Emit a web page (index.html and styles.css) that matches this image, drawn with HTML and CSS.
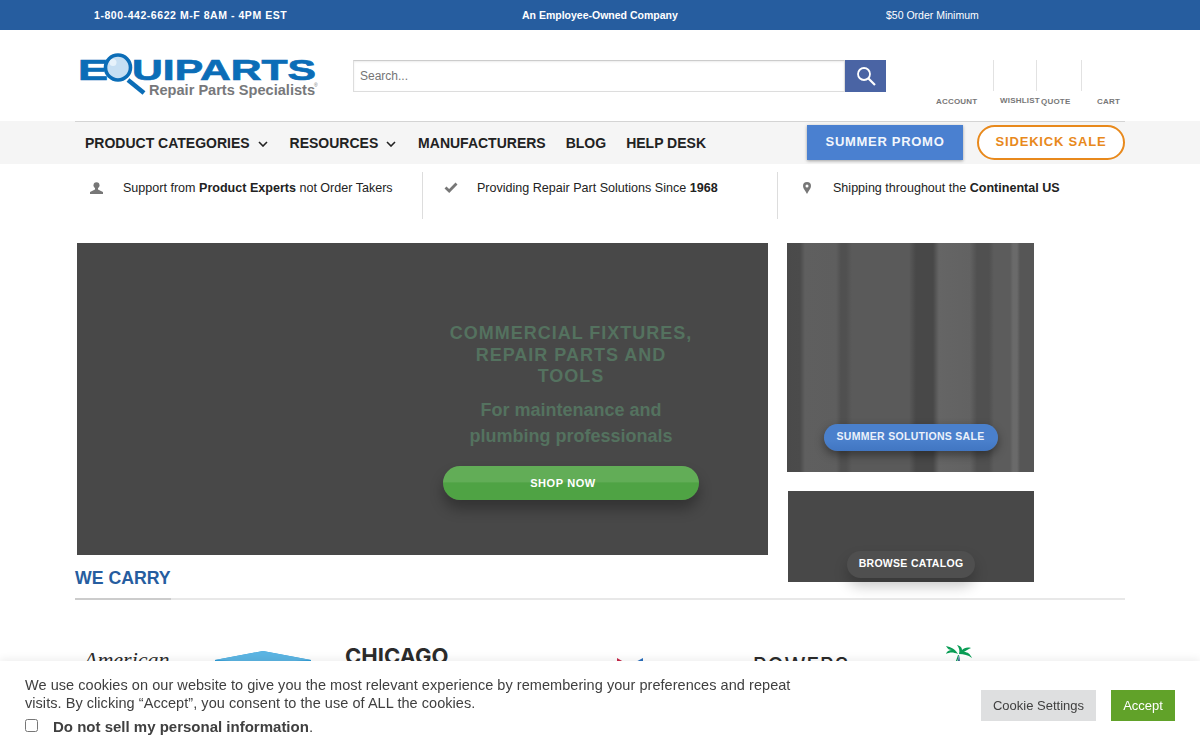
FILE: index.html
```html
<!DOCTYPE html>
<html lang="en">
<head>
  <meta charset="UTF-8">
  <meta name="viewport" content="width=device-width, initial-scale=1.0">
  <title>Equiparts</title>
  <link rel="stylesheet" href="styles.css">
</head>
<body>
  <div class="topbar">
    <span class="top-phone">1-800-442-6622 M-F 8AM - 4PM EST</span>
    <span class="top-owned">An Employee-Owned Company</span>
    <span class="top-min">$50 Order Minimum</span>
  </div>

  <header class="header">
    <a class="logo" href="#">
      <svg width="240" height="46" viewBox="0 0 240 46">
        <text class="logo-word" x="0" y="28" textLength="30" lengthAdjust="spacingAndGlyphs">E</text>
        <text class="logo-word" x="54" y="28" textLength="184" lengthAdjust="spacingAndGlyphs">UIPARTS</text>
        <line x1="50" y1="28" x2="66" y2="41" stroke="#0b6db7" stroke-width="4.5"/>
        <circle cx="40" cy="15.500" r="12.500" fill="#c6dff3" stroke="#0b6db7" stroke-width="3.600"/>
        <circle cx="35" cy="10.500" r="3.500" fill="#e6f2fb"/>
        <text class="logo-tag" x="71" y="43" textLength="166" lengthAdjust="spacingAndGlyphs">Repair Parts Specialists</text>
        <text class="logo-reg" x="236" y="35">®</text>
      </svg>
    </a>
    <form class="search">
      <input class="search-input" type="text" placeholder="Search...">
      <button class="search-btn" type="button" aria-label="Search">
        <svg width="20" height="20" viewBox="0 0 20 20" fill="none" stroke="#fff" stroke-width="1.800">
          <circle cx="8" cy="8" r="6"/>
          <path d="M12.500 12.500L19 19" stroke-width="2.200"/>
        </svg>
      </button>
    </form>
    <div class="account-links">
      <a class="acc acc-account" href="#"><span>ACCOUNT</span></a>
      <a class="acc acc-wishlist" href="#"><span>WISHLIST</span></a>
      <a class="acc acc-quote" href="#"><span>QUOTE</span></a>
      <a class="acc acc-cart" href="#"><span>CART</span></a>
    </div>
  </header>

  <nav class="nav">
    <div class="nav-inner">
      <a class="nav-link" href="#">PRODUCT CATEGORIES
        <svg class="chev" width="10" height="6" viewBox="0 0 10 6"><path d="M1 1l4 4 4-4" fill="none" stroke="#222" stroke-width="1.600"/></svg>
      </a>
      <a class="nav-link" href="#">RESOURCES
        <svg class="chev" width="10" height="6" viewBox="0 0 10 6"><path d="M1 1l4 4 4-4" fill="none" stroke="#222" stroke-width="1.600"/></svg>
      </a>
      <a class="nav-link" href="#">MANUFACTURERS</a>
      <a class="nav-link" href="#">BLOG</a>
      <a class="nav-link" href="#">HELP DESK</a>
      <a class="promo-btn" href="#">SUMMER PROMO</a>
      <a class="sidekick-btn" href="#">SIDEKICK SALE</a>
    </div>
  </nav>

  <section class="benefits">
    <div class="benefit benefit-one">
      <svg class="benefit-icon" width="13" height="12" viewBox="0 0 13 12" fill="#777"><circle cx="6.500" cy="3.200" r="3"/><path d="M5 6h3v1.500L13 10v2H0v-2l5-2.500z"/></svg>
      <p>Support from <b>Product Experts</b> not Order Takers</p>
    </div>
    <div class="benefit benefit-two">
      <svg class="benefit-icon" width="14" height="11" viewBox="0 0 14 11"><path d="M1.500 5.500l3.700 3.500L12.500 1.500" fill="none" stroke="#777" stroke-width="2.800"/></svg>
      <p>Providing Repair Part Solutions Since <b>1968</b></p>
    </div>
    <div class="benefit benefit-three">
      <svg class="benefit-icon" width="8" height="12" viewBox="0 0 8 12"><path d="M4 0a4 4 0 0 1 4 4c0 2.500-2.500 5-4 8C2.500 9 0 6.500 0 4a4 4 0 0 1 4-4z" fill="#777"/><circle cx="4" cy="4" r="1.500" fill="#fff"/></svg>
      <p>Shipping throughout the <b>Continental US</b></p>
    </div>
  </section>

  <main class="hero-row">
    <div class="hero">
      <div class="hero-copy">
        <h1>COMMERCIAL FIXTURES, REPAIR PARTS AND TOOLS</h1>
        <p>For maintenance and plumbing professionals</p>
        <a class="shop-btn" href="#">SHOP NOW</a>
      </div>
    </div>
    <div class="side">
      <div class="side-card side-summer">
        <a class="pill pill-blue" href="#">SUMMER SOLUTIONS SALE</a>
      </div>
      <div class="side-card side-catalog">
        <a class="pill pill-dark" href="#">BROWSE CATALOG</a>
      </div>
    </div>
  </main>

  <section class="carry">
    <div class="carry-head"><h2>WE CARRY</h2></div>
    <div class="brands">
      <span class="brand brand-american">American</span>
      <svg class="brand brand-hex" width="96" height="60" viewBox="0 0 96 60"><path d="M0 9L48 0l48 9v30L48 60 0 39z" fill="#2a9ad6"/><path d="M0 9L48 0l48 9-48 3z" fill="#5cb5e3"/></svg>
      <span class="brand brand-chicago">CHICAGO</span>
      <svg class="brand brand-star" width="26" height="30" viewBox="0 0 26 30"><path d="M0 0l12 7v20H0z" fill="#c8284a"/><path d="M26 0L13 7v20h13z" fill="#2a6fbe"/></svg>
      <span class="brand brand-powers">POWERS</span>
      <svg class="brand brand-palm" width="26" height="40" viewBox="0 0 26 40">
        <path d="M12 9C9 4 5 2 0 1c2 3 3 4 6 4-3 0-5 1-6 4 4-2 7-2 12 0zM13 9c1-4 0-6-2-9 4 1 5 3 5 5 2-2 5-3 9-2-3 1-5 3-7 4 4 0 6 2 8 6-4-3-8-4-13-4z" fill="#0a9d55"/>
        <path d="M12 10c-1 3-2 6-4 10l2 1c1-4 2-7 3-11z" fill="#0a9d55"/>
        <path d="M13 10c1 4 1 8 1 12h-3c1-4 1-8 2-12z" fill="#2b5d8f"/>
      </svg>
    </div>
  </section>

  <aside class="cookie-bar">
    <div class="cookie-text">
      <p>We use cookies on our website to give you the most relevant experience by remembering your preferences and repeat visits. By clicking “Accept”, you consent to the use of ALL the cookies.</p>
      <label class="cookie-check"><input type="checkbox"><span><b>Do not sell my personal information</b>.</span></label>
    </div>
    <div class="cookie-actions">
      <button class="cookie-settings" type="button">Cookie Settings</button>
      <button class="cookie-accept" type="button">Accept</button>
    </div>
  </aside>
</body>
</html>
```

FILE: styles.css
```css
body {
  margin: 0;
  font-family: "Liberation Sans", Arial, sans-serif;
  color: #222;
  background: white;
  overflow: hidden;
}

a {
  text-decoration: none;
  color: inherit;
}

/* top bar */
.topbar {
  height: 30px;
  background: #265d9f;
  color: #fff;
  font-size: 10.500px;
  line-height: 30px;
  display: flex;
}

.top-phone {
  margin-left: 94px;
  width: 428px;
  font-weight: bold;
  letter-spacing: 0.550px;
}

.top-owned {
  width: 364px;
  font-weight: bold;
}

/* header */
.header {
  height: 91px;
  display: flex;
  align-items: flex-start;
  padding-left: 78px;
}

.logo {
  display: block;
  width: 275px;
  margin-top: 22px;
}

.logo svg {
  display: block;
}

.logo-word {
  font-family: "Liberation Sans", Arial, sans-serif;
  font-weight: bold;
  font-size: 30px;
  fill: #0b6db7;
  stroke: #0b6db7;
  stroke-width: 0.700px;
}

.logo-tag {
  font-family: "Liberation Sans", Arial, sans-serif;
  font-weight: bold;
  font-size: 14px;
  fill: #77787b;
}

.logo-reg {
  font-family: "Liberation Sans", Arial, sans-serif;
  font-size: 5px;
  fill: #77787b;
}

.search {
  display: flex;
  margin-top: 30px;
  width: 533px;
}

.search-input {
  width: 492px;
  height: 32px;
  box-sizing: border-box;
  padding: 0 6px;
  border: 1px solid #ddd;
  border-top-color: #ccc;
  box-shadow: inset 0 1px 2px rgba(0, 0, 0, 0.08);
  font: 12px "Liberation Sans", Arial, sans-serif;
  outline: none;
}

.search-input::placeholder {
  color: #757575;
}

.search-btn {
  width: 41px;
  height: 32px;
  border: 0;
  padding: 0;
  background: #4a64a4;
  display: flex;
  align-items: center;
  justify-content: center;
}

.account-links {
  display: flex;
  margin-top: 30px;
  margin-left: 31px;
}

.acc {
  display: block;
  height: 31px;
  border-right: 1px solid #e2e2e2;
  font-size: 8px;
  font-weight: bold;
  color: #777;
  letter-spacing: 0.200px;
}

.acc span {
  display: block;
  margin-top: 37px;
  white-space: nowrap;
}

.acc-account {
  width: 57px;
  padding-left: 19px;
}

.acc-wishlist {
  width: 36px;
  padding-left: 6px;
}

.acc-wishlist span {
  margin-top: 36px;
}

.acc-quote {
  width: 40px;
  padding-left: 4px;
}

.acc-cart {
  width: 28px;
  padding-left: 15px;
  border-right: 0;
}

/* nav */
.nav {
  height: 43px;
  background: #f5f5f5;
}

.nav-inner {
  width: 1040px;
  height: 42px;
  margin-left: 75px;
  padding-left: 10px;
  border-top: 1px solid #d4d4d4;
  display: flex;
  align-items: center;
}

.nav-link {
  font-size: 14px;
  font-weight: bold;
  color: #222;
  margin-right: 20px;
  white-space: nowrap;
}

.chev {
  margin-left: 4px;
  margin-right: 2px;
  vertical-align: 1px;
}

.promo-btn {
  margin-left: 81px;
  margin-bottom: 1px;
  width: 156px;
  height: 35px;
  line-height: 33px;
  background: #4a80d0;
  color: #f2f6fc;
  font-size: 13px;
  font-weight: bold;
  letter-spacing: 0.700px;
  text-align: center;
  box-shadow: 0 1px 3px rgba(0, 0, 0, 0.35);
}

.sidekick-btn {
  margin-left: 14px;
  margin-bottom: 1px;
  width: 144px;
  height: 31px;
  line-height: 29px;
  border: 2px solid #e8891c;
  border-radius: 18px;
  background: #fff;
  color: #e8891c;
  font-size: 13px;
  font-weight: bold;
  letter-spacing: 0.800px;
  text-align: center;
}

/* benefits */
.benefits {
  height: 79px;
  display: flex;
  align-items: flex-start;
  padding-top: 8px;
  box-sizing: border-box;
  padding-left: 75px;
  font-size: 12.550px;
  color: #222;
}

.benefit {
  height: 47px;
  display: flex;
  box-sizing: border-box;
}

.benefit p {
  margin: 9px 0 0;
  line-height: 15px;
  white-space: nowrap;
}

.benefit-one {
  width: 348px;
  border-right: 1px solid #ddd;
}

.benefit-two {
  width: 355px;
  border-right: 1px solid #ddd;
}

.benefit-icon {
  margin-top: 10px;
  margin-left: 15px;
  margin-right: 20px;
  flex: none;
}

.benefit-two .benefit-icon {
  margin-left: 21px;
  margin-right: 19px;
}

.benefit-three .benefit-icon {
  margin-left: 25px;
  margin-right: 22px;
}

/* hero */
.hero-row {
  display: grid;
  grid-template-columns: 691px 247px;
  grid-template-rows: 312px;
  column-gap: 19px;
  align-items: start;
  padding-left: 77px;
}

.hero {
  height: 312px;
  background: #484848;
  padding-left: 366px;
  box-sizing: border-box;
}

.hero-copy {
  width: 256px;
  padding-top: 80px;
  text-align: center;
  color: #54725f;
}

.hero-copy h1 {
  margin: 0 0 0 -2px;
  width: 260px;
  font-size: 18px;
  line-height: 21.500px;
  letter-spacing: 1px;
  font-weight: bold;
}

.hero-copy p {
  margin: 9px 0 0;
  padding: 0 20px;
  font-size: 18px;
  line-height: 26px;
  font-weight: bold;
}

.shop-btn {
  display: block;
  margin-top: 17px;
  height: 34px;
  line-height: 34px;
  padding-right: 16px;
  border-radius: 17px;
  background: linear-gradient(#62ad57 0, #62ad57 46%, #4fa344 50%, #4fa344 100%);
  color: #fff;
  font-size: 11px;
  font-weight: bold;
  letter-spacing: 0.600px;
  box-shadow: 0 9px 14px rgba(0, 0, 0, 0.3);
}

.side-card {
  width: 247px;
  display: flex;
  align-items: flex-end;
  justify-content: center;
}

.side-summer {
  height: 229px;
  padding-bottom: 21px;
  box-sizing: border-box;
  background: linear-gradient(90deg,
    #4a4a4a 0, #4b4b4b 13px, #5f5f5f 18px, #5e5e5e 49px, #505050 54px, #505050 59px,
    #5a5a5a 65px, #5a5a5a 122px, #484848 129px, #484848 146px, #656565 152px,
    #626262 183px, #505050 190px, #505050 202px, #5c5c5c 207px, #5c5c5c 223px,
    #6a6a6a 226px, #6a6a6a 230px, #565656 233px, #565656 100%);
}

.side-catalog {
  height: 91px;
  margin-top: 19px;
  margin-left: 1px;
  width: 246px;
  padding-bottom: 4px;
  box-sizing: border-box;
  background: #484848;
}

.pill {
  display: block;
  height: 27px;
  line-height: 25px;
  border-radius: 14px;
  color: #fff;
  font-size: 10.500px;
  font-weight: bold;
  letter-spacing: 0.300px;
  text-align: center;
}

.pill-blue {
  width: 174px;
  background: linear-gradient(#4a80cc, #4a80cc 60%, #4176c2);
  color: #eaf1fb;
  box-shadow: 0 4px 10px rgba(0, 0, 0, 0.4);
}

.pill-dark {
  width: 128px;
  background: #4f4f4f;
  box-shadow: 0 8px 14px rgba(0, 0, 0, 0.22);
}

/* we carry */
.carry {
  margin: 0 75px;
}

.carry-head {
  border-bottom: 2px solid #e8e8e8;
  height: 43px;
}

.carry-head h2 {
  display: inline-block;
  margin: 0;
  height: 45px;
  padding-top: 13px;
  box-sizing: border-box;
  border-bottom: 2px solid #ccc;
  font-size: 17.700px;
  line-height: 21px;
  color: #265d9f;
}

.brands {
  display: flex;
  align-items: flex-start;
}

.brand {
  flex: none;
  white-space: nowrap;
}

.brand-american {
  margin: 47px 0 0 9px;
  width: 88px;
  font: italic 22px "Liberation Serif", serif;
  color: #2a2a2a;
}

.brand-hex {
  margin: 51px 0 0 43px;
}

.brand-chicago {
  margin: 43px 0 0 34px;
  width: 104px;
  font: bold 22px Inter, "Open Sans", sans-serif;
  color: #2b2b2b;
}

.brand-star {
  margin: 58px 0 0 168px;
}

.brand-powers {
  margin: 53px 0 0 110px;
  width: 98px;
  font: 500 21px Inter, "Open Sans", sans-serif;
  letter-spacing: 1px;
  color: #2b2b2b;
}

.brand-palm {
  margin: 45px 0 0 95px;
}

/* cookie bar */
.cookie-bar {
  position: fixed;
  left: 0;
  right: 0;
  bottom: 0;
  height: 89px;
  box-sizing: border-box;
  background: #fff;
  box-shadow: 0 -2px 8px rgba(0, 0, 0, 0.07);
  padding: 15px 25px 0;
  display: flex;
  color: #404040;
  font-size: 14.500px;
}

.cookie-text {
  width: 956px;
}

.cookie-text p {
  margin: 0;
  width: 790px;
  line-height: 18px;
  letter-spacing: 0.050px;
}

.cookie-check {
  display: flex;
  margin-top: 6px;
  font-size: 15px;
  line-height: 18px;
}

.cookie-check input {
  width: 13px;
  height: 13px;
  margin: 1px 15px 0 0;
}

.cookie-actions {
  display: flex;
  gap: 15px;
  margin-top: 14px;
  align-items: flex-start;
}

.cookie-settings,
.cookie-accept {
  height: 31px;
  border: 0;
  padding: 0;
  font: 13px "Liberation Sans", Arial, sans-serif;
}

.cookie-settings {
  width: 115px;
  background: #dedfe0;
  color: #404040;
}

.cookie-accept {
  width: 64px;
  background: #61a229;
  color: #fff;
}
```
